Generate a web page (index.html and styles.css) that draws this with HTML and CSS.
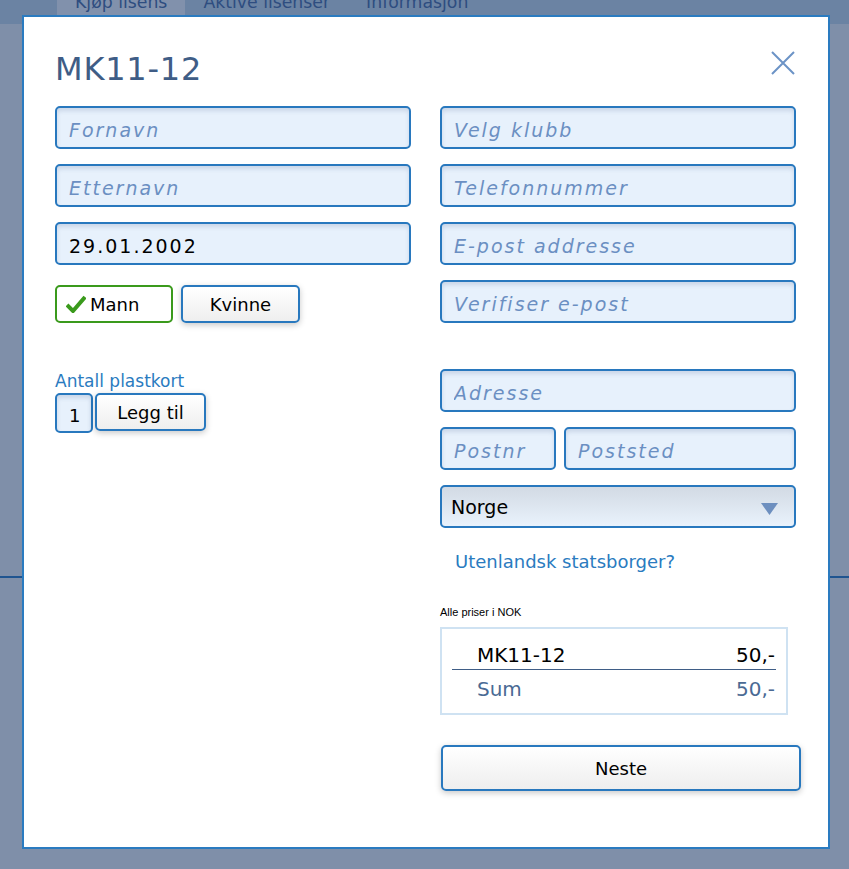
FILE: index.html
```html
<!DOCTYPE html>
<html lang="no">
<head>
    <meta charset="UTF-8" />
    <title>Kjøp lisens</title>
    <link rel="stylesheet" href="styles.css">
</head>
<body>
    <div id="topbar">
        <div class="tabs">
            <a class="tab active">Kjøp lisens</a>
            <a class="tab">Aktive lisenser</a>
            <a class="tab">Informasjon</a>
        </div>
    </div>
    <div id="page"></div>

    <div class="modal">
        <div class="modal-head">
            <h1>MK11-12</h1>
            <svg class="close" width="24" height="24" viewBox="0 0 24 24">
                <path d="M1 1 L23 23 M23 1 L1 23" stroke="#6c93c6" stroke-width="2" fill="none" />
            </svg>
        </div>
        <div class="cols">
            <div class="col">
                <input class="field" type="text" placeholder="Fornavn" />
                <input class="field" type="text" placeholder="Etternavn" />
                <input class="field date" type="text" value="29.01.2002" />
                <div class="gender">
                    <button class="btn checked">
                        <svg width="20" height="18" viewBox="0 0 20 18">
                            <path d="M1 10 L7 16 L19 2" stroke="#3a9a1c" stroke-width="4" fill="none" />
                        </svg>
                        Mann
                    </button>
                    <button class="btn">Kvinne</button>
                </div>
                <div class="label">Antall plastkort</div>
                <div class="count">
                    <input class="num" type="text" value="1" />
                    <button class="btn add">Legg til</button>
                </div>
            </div>
            <div class="col">
                <input class="field" type="text" placeholder="Velg klubb" />
                <input class="field" type="text" placeholder="Telefonnummer" />
                <input class="field" type="text" placeholder="E-post addresse" />
                <input class="field" type="text" placeholder="Verifiser e-post" />
                <input class="field address" type="text" placeholder="Adresse" />
                <div class="postrow">
                    <input class="field postnr" type="text" placeholder="Postnr" />
                    <input class="field" type="text" placeholder="Poststed" />
                </div>
                <div class="select">
                    <span>Norge</span>
                    <svg width="17" height="12" viewBox="0 0 17 12">
                        <path d="M0 0 L17 0 L8.5 12 Z" fill="#6d8fbf" />
                    </svg>
                </div>
                <a class="link">Utenlandsk statsborger?</a>
                <div class="note">Alle priser i NOK</div>
                <div class="prices">
                    <div class="row item"><span>MK11-12</span><span>50,-</span></div>
                    <div class="row sum"><span>Sum</span><span>50,-</span></div>
                </div>
                <button class="btn next">Neste</button>
            </div>
        </div>
    </div>
</body>
</html>
```

FILE: styles.css
```css
body {
    margin: 0;
    padding: 0;
    background: #7f8fa9;
    font-family: "DejaVu Sans", "Noto Sans", sans-serif;
    overflow: hidden;
}
#topbar {
    height: 24px;
    background: #6b83a3;
    overflow: hidden;
}
.tabs {
    display: flex;
    margin-left: 57px;
    margin-top: -6px;
}
.tab {
    height: 21px;
    line-height: 17px;
    padding: 0 18px;
    font-size: 17.3px;
    color: #2e4d80;
}
.tab.active {
    background: #8191ac;
}
#page {
    height: 552px;
    border-bottom: 2px solid #1f5490;
}

/* modal over the page */
.modal {
    position: absolute;
    left: 22px;
    top: 15px;
    width: 808px;
    height: 834px;
    box-sizing: border-box;
    background: #fff;
    border: 2px solid #2a7bc0;
    padding: 32px 32px 0 31px;
}
.modal-head {
    display: flex;
    justify-content: space-between;
    align-items: flex-start;
    height: 40px;
}
.modal-head h1 {
    margin: 0;
    font-size: 32px;
    line-height: 40px;
    font-weight: normal;
    color: #3f5d86;
    letter-spacing: 0.8px;
}
.close {
    margin-top: 2px;
    margin-right: 1px;
}
.cols {
    display: grid;
    grid-template-columns: 356px 356px;
    column-gap: 29px;
    margin-top: 17px;
}
.col {
    display: flex;
    flex-direction: column;
    gap: 15px;
    align-items: flex-start;
}

.field {
    box-sizing: border-box;
    width: 100%;
    height: 43px;
    margin: 0;
    padding: 5px 12px 0;
    border: 2px solid #2878be;
    border-radius: 5px;
    background: #e7f1fc;
    box-shadow: inset 0 3px 4px rgba(40, 70, 120, 0.15);
    font-family: "DejaVu Sans", sans-serif;
    font-size: 19px;
    letter-spacing: 2px;
    color: #000;
    outline: none;
}
.field::placeholder {
    color: #6b8fc2;
    font-style: italic;
}

.btn {
    box-sizing: border-box;
    height: 38px;
    margin: 0;
    padding: 0;
    border: 2px solid #2878be;
    border-radius: 5px;
    background: linear-gradient(#ffffff, #eeeeee);
    box-shadow: 0 2px 6px rgba(0, 0, 0, 0.22);
    font-family: "DejaVu Sans", sans-serif;
    font-size: 18px;
    color: #000;
}

.gender {
    display: flex;
    gap: 8px;
    margin-top: 5px;
}
.gender .btn {
    width: 119px;
}
.gender .checked {
    width: 118px;
    display: flex;
    align-items: center;
    gap: 4px;
    padding-left: 9px;
    border-color: #3a9a1c;
    background: #fff;
    box-shadow: none;
}

.label {
    margin-top: 33px;
    font-size: 17px;
    line-height: 20px;
    color: #2a7bc0;
}
.count {
    display: flex;
    gap: 2px;
    margin-top: -13px;
}
.num {
    box-sizing: border-box;
    width: 38px;
    height: 40px;
    padding: 5px 0 0 12px;
    border: 2px solid #2878be;
    border-radius: 5px;
    background: #e7f1fc;
    box-shadow: inset 0 3px 4px rgba(40, 70, 120, 0.15);
    font-family: "DejaVu Sans", sans-serif;
    font-size: 18px;
}
.add {
    width: 111px;
}

.address {
    margin-top: 31px;
}
.postrow {
    display: flex;
    gap: 8px;
    width: 100%;
}
.postrow .postnr {
    width: 116px;
    flex: none;
}
.select {
    box-sizing: border-box;
    width: 100%;
    height: 43px;
    display: flex;
    justify-content: space-between;
    align-items: center;
    padding: 0 16px 0 9px;
    border: 2px solid #2878be;
    border-radius: 5px;
    background: linear-gradient(#d2dae4, #e9f2fc);
    font-size: 19px;
}
.select svg {
    margin-top: 4px;
}
.link {
    margin: 7px 0 0 15px;
    font-size: 18px;
    line-height: 24px;
    color: #2a7bc0;
}
.note {
    margin-top: 17px;
    font-family: "Liberation Sans", sans-serif;
    font-size: 11px;
    line-height: 13px;
    color: #000;
}
.prices {
    box-sizing: border-box;
    width: 348px;
    margin-top: -7px;
    padding: 13px 10px 10px;
    border: 2px solid #cfe2f2;
}
.row {
    display: flex;
    justify-content: space-between;
    padding: 0 1px 0 25px;
    font-size: 20px;
    line-height: 27px;
}
.item {
    border-bottom: 1px solid #3f5d86;
}
.sum {
    padding-top: 6px;
    color: #4a6a94;
}
.next {
    width: 360px;
    height: 46px;
    margin: 15px 0 0 1px;
}
```
